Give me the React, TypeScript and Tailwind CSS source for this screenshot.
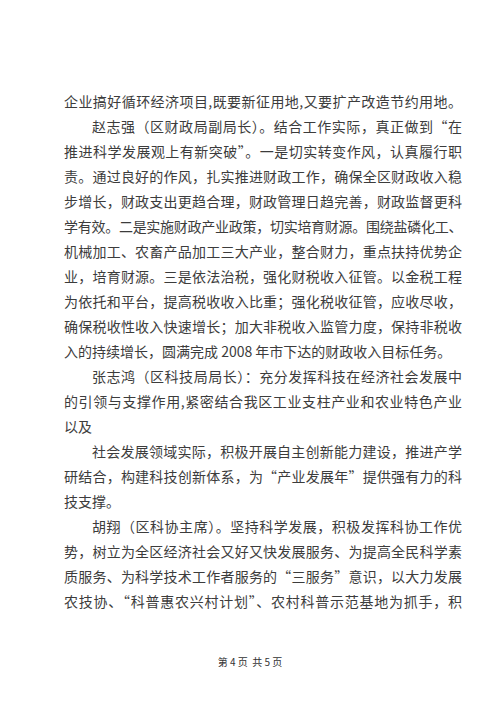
const lines: { text: string; indent?: boolean; last?: boolean; tight?: boolean }[] = [
  { text: '企业搞好循环经济项目,既要新征用地,又要扩产改造节约用地。' },
  { text: '赵志强（区财政局副局长）。结合工作实际，真正做到“在', indent: true },
  { text: '推进科学发展观上有新突破”。一是切实转变作风，认真履行职' },
  { text: '责。通过良好的作风，扎实推进财政工作，确保全区财政收入稳' },
  { text: '步增长，财政支出更趋合理，财政管理日趋完善，财政监督更科' },
  { text: '学有效。二是实施财政产业政策，切实培育财源。围绕盐磷化工、', tight: true },
  { text: '机械加工、农畜产品加工三大产业，整合财力，重点扶持优势企' },
  { text: '业，培育财源。三是依法治税，强化财税收入征管。以金税工程' },
  { text: '为依托和平台，提高税收收入比重；强化税收征管，应收尽收，' },
  { text: '确保税收性收入快速增长；加大非税收入监管力度，保持非税收' },
  { text: '入的持续增长，圆满完成 2008 年市下达的财政收入目标任务。', last: true },
  { text: '张志鸿（区科技局局长）：充分发挥科技在经济社会发展中', indent: true },
  { text: '的引领与支撑作用,紧密结合我区工业支柱产业和农业特色产业' },
  { text: '以及', last: true },
  { text: '社会发展领域实际，积极开展自主创新能力建设，推进产学', indent: true },
  { text: '研结合，构建科技创新体系，为“产业发展年”提供强有力的科' },
  { text: '技支撑。', last: true },
  { text: '胡翔（区科协主席）。坚持科学发展，积极发挥科协工作优', indent: true },
  { text: '势，树立为全区经济社会又好又快发展服务、为提高全民科学素' },
  { text: '质服务、为科学技术工作者服务的“三服务”意识，以大力发展' },
  { text: '农技协、“科普惠农兴村计划”、农村科普示范基地为抓手，积' },
]

export default function App() {
  return (
    <div className="w-[500px] h-[707px] bg-white overflow-hidden font-['Noto_Sans_CJK_SC',sans-serif] text-[#3c3c3c]">
      <div className="ml-[64px] w-[398px] pt-[89px]">
        {lines.map((l, i) => (
          <div
            key={i}
            className={[
              'text-[14px] leading-[25px] h-[25px] overflow-hidden',
              l.indent ? 'pl-[28px]' : '',
              l.last ? 'text-left' : 'text-justify [text-align-last:justify]',
              l.tight ? 'tracking-[-0.4px]' : '',
            ].join(' ')}
          >
            {l.text}
          </div>
        ))}
      </div>
      <div className="mt-[41px] text-center text-[10px] leading-[14px] whitespace-pre text-[#333]">第 4 页  共 5 页</div>
    </div>
  )
}
